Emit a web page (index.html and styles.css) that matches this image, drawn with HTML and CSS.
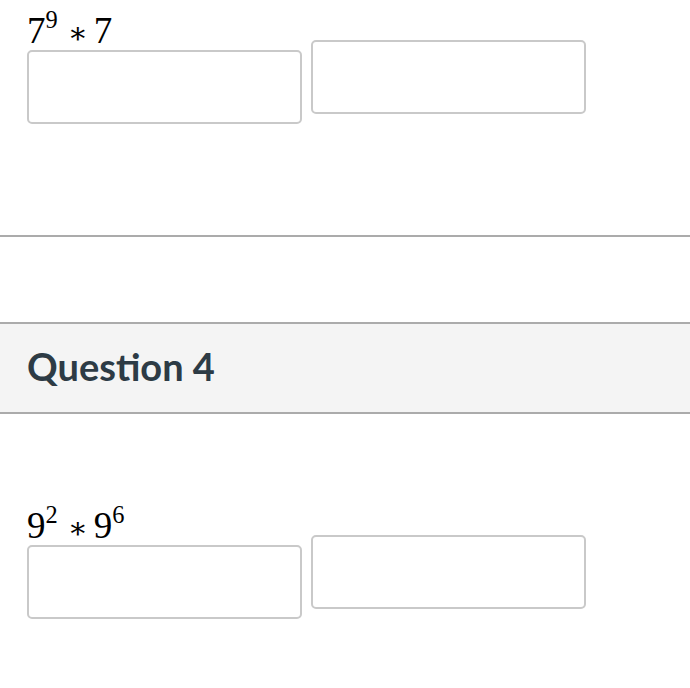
FILE: index.html
```html
<!DOCTYPE html>
<html>
<head>
<meta charset="utf-8">
<link rel="stylesheet" href="styles.css">
</head>
<body>
<section class="question-body first">
  <div class="expr">7<span class="sup">9</span><span class="op">∗</span>7</div>
  <div class="answers">
    <div class="answer low"></div>
    <div class="answer"></div>
  </div>
</section>
<hr class="divider">
<header class="question-header">
  <h2 class="question-title">Question 4</h2>
</header>
<section class="question-body second">
  <div class="expr">9<span class="sup">2</span><span class="op">∗</span>9<span class="sup">6</span></div>
  <div class="answers">
    <div class="answer low"></div>
    <div class="answer"></div>
  </div>
</section>
</body>
</html>
```
FILE: styles.css
```css
html, body {
  margin: 0;
  padding: 0;
  background: #ffffff;
  font-family: Lato, "Liberation Sans", sans-serif;
}
.question-body {
  padding-left: 27px;
}
.question-body.second {
  margin-top: 81px;
}
.expr {
  font-family: "Liberation Serif", "DejaVu Serif", serif;
  font-size: 37px;
  line-height: 20px;
  padding-top: 20px;
  height: 20px;
  color: #000;
  white-space: nowrap;
}
.sup {
  font-size: 0.66em;
  line-height: 0;
  vertical-align: 0.6em;
}
.op {
  font-family: "DejaVu Serif", serif;
  font-size: 0.8em;
  margin: 0 6px 0 10px;
}
.answers {
  display: flex;
  align-items: flex-start;
  gap: 9px;
}
.answer {
  width: 275px;
  height: 74px;
  box-sizing: border-box;
  border: 2px solid #c9c9c9;
  border-radius: 5px;
  background: #fff;
}
.answer.low {
  margin-top: 10px;
}
.divider {
  margin: 111px 0 0 0;
  border: 0;
  border-top: 2px solid #ababab;
  height: 0;
}
.question-header {
  margin-top: 85px;
  height: 88px;
  box-sizing: content-box;
  background: #f4f4f4;
  border-top: 2px solid #ababab;
  border-bottom: 2px solid #ababab;
  display: flex;
  align-items: center;
  padding-left: 27px;
}
.question-title {
  margin: 0 0 4px 0;
  font-family: Lato, sans-serif;
  font-weight: 700;
  font-size: 38px;
  color: #2d3b45;
}
```
